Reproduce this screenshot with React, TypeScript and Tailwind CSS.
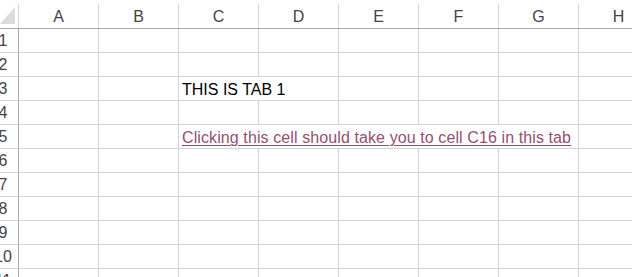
import React from 'react';

const COLS = ['A', 'B', 'C', 'D', 'E', 'F', 'G', 'H'];
const ROWS = [1, 2, 3, 4, 5, 6, 7, 8, 9, 10, 11];

// text that spills over neighbouring empty cells: start column index + span
const CELLS: Record<number, { col: number; span: number; text: string; link?: boolean }> = {
    3: { col: 2, span: 2, text: 'THIS IS TAB 1' },
    5: { col: 2, span: 5, text: 'Clicking this cell should take you to cell C16 in this tab', link: true },
};

const Row: React.FC<{ n: number }> = ({ n }) => {
    const cell = CELLS[n];
    const items: React.ReactNode[] = [];
    for (let i = 0; i < COLS.length; i++) {
        if (cell && i === cell.col) {
            items.push(
                <div
                    key={i}
                    className="h-full shrink-0 border-r border-[#d4d4d4] flex items-end pl-[3px] pb-[2px] whitespace-nowrap overflow-visible"
                    style={{ width: cell.span * 80 }}
                >
                    {cell.link ? (
                        <span className="text-[#954f72] underline decoration-1 underline-offset-[2px] tracking-[0.1px]">{cell.text}</span>
                    ) : (
                        <span className="text-black">{cell.text}</span>
                    )}
                </div>
            );
            i += cell.span - 1;
        } else {
            items.push(<div key={i} className="w-[80px] h-full shrink-0 border-r border-[#d4d4d4]" />);
        }
    }
    return (
        <div className="flex h-[24px] border-b border-[#d4d4d4]">
            <div className="w-[31px] h-full shrink-0 border-r border-[#a8a8a8] flex items-center justify-center text-[#444444]">
                {n}
            </div>
            {items}
        </div>
    );
};

export default function App() {
    return (
        <div
            className="w-[632px] h-[277px] overflow-hidden bg-white text-[16px] leading-none"
            style={{ fontFamily: '"Liberation Sans", Arial, sans-serif' }}
        >
            <div className="ml-[-12px] w-[700px]">
                {/* column headers */}
                <div className="flex items-end h-[29px] border-b border-[#a8a8a8]">
                    <div className="w-[31px] h-[24px] shrink-0 border-r border-[#d4d4d4] relative">
                        <svg width="17" height="18" viewBox="0 0 17 18" className="absolute left-[12px] top-[3px]">
                            <polygon points="15,0 15,17 0,17" fill="#dcdcdc" />
                        </svg>
                    </div>
                    {COLS.map((c) => (
                        <div
                            key={c}
                            className="w-[80px] h-[24px] shrink-0 border-r border-[#d4d4d4] flex items-center justify-center pt-[1px] text-[#444444]"
                        >
                            {c}
                        </div>
                    ))}
                </div>
                {ROWS.map((n) => (
                    <Row key={n} n={n} />
                ))}
            </div>
        </div>
    );
}
